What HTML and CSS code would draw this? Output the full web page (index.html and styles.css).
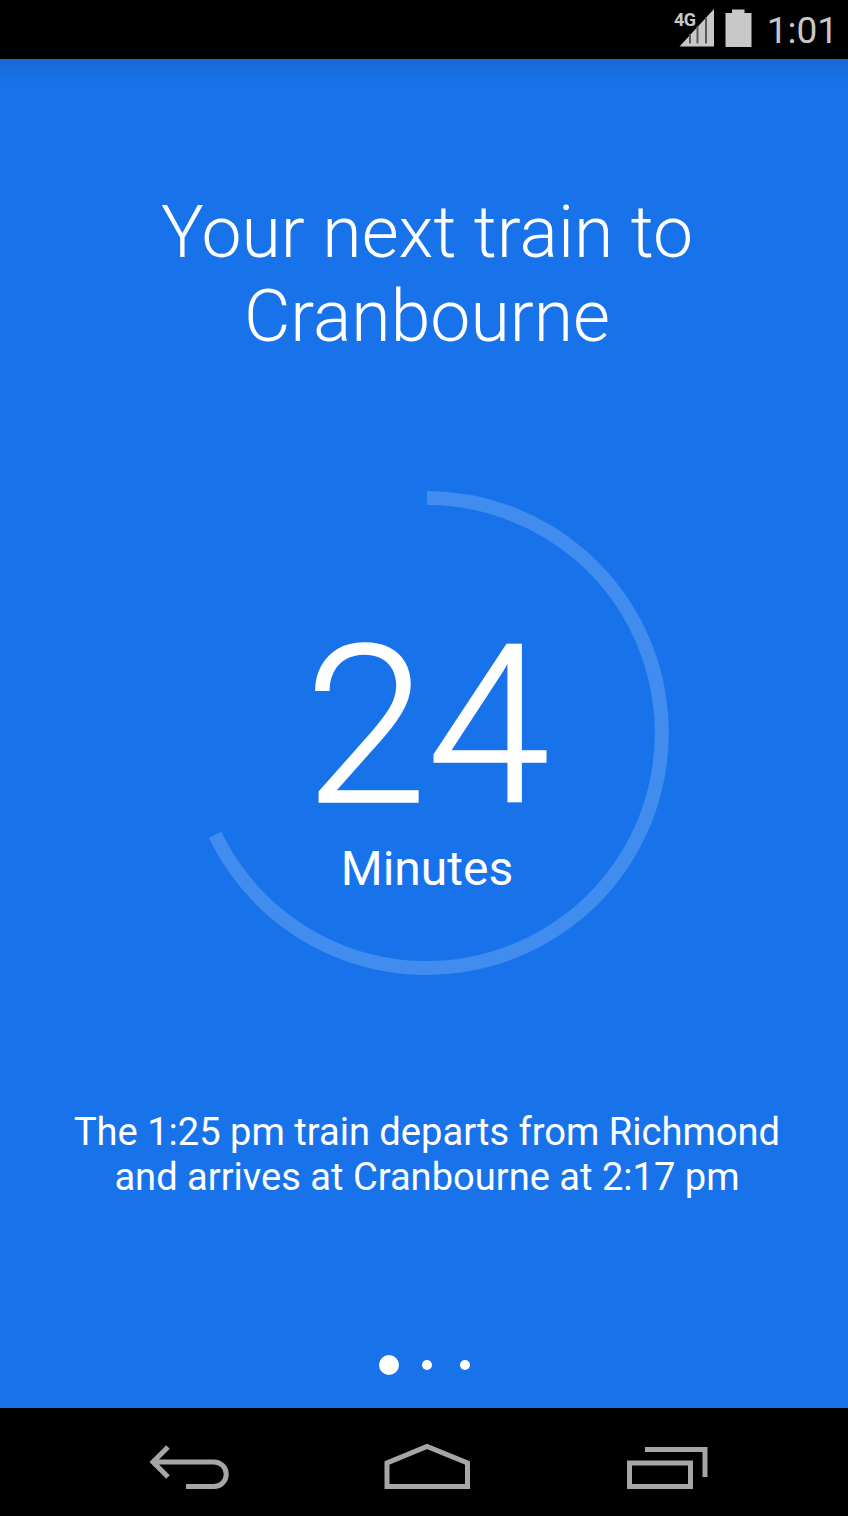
FILE: index.html
```html
<!DOCTYPE html>
<html lang="en">
<head>
<meta charset="utf-8">
<title>Next train</title>
<link rel="stylesheet" href="styles.css">
</head>
<body>
<div class="phone">
  <header class="status">
    <div class="net">
      <span class="net-label">4G</span>
      <svg class="signal" width="36" height="38" viewBox="0 0 36 38"><path class="signal-fill" d="M0.500 37.500H35V0Z"/><path class="signal-gap" d="M11 25V34.500M18.500 17V34.500M27 8V34.500"/></svg>
    </div>
    <svg class="battery" width="27" height="38" viewBox="0 0 27 38"><path d="M7 0.500H19.500V4H26.500V38H0.500V4H7Z"/></svg>
    <span class="clock">1:01</span>
  </header>
  <main class="screen">
    <h1 class="title">Your next train to<br>Cranbourne</h1>
    <div class="ring">
      <svg class="ring-arc" width="486" height="486" viewBox="0 0 486 486"><path d="M243 8A235 235 0 1 1 31 344.800"/></svg>
      <div class="ring-text">
        <div class="count">24</div>
        <div class="unit">Minutes</div>
      </div>
    </div>
    <p class="detail">The 1:25 pm train departs from Richmond<br>and arrives at Cranbourne at 2:17 pm</p>
    <div class="dots">
      <span class="dot dot-active"></span>
      <span class="dot"></span>
      <span class="dot"></span>
    </div>
  </main>
  <nav class="nav">
    <svg class="nav-icon" width="84" height="48" viewBox="0 0 84 48"><path d="M20 4L5 19L20 34M5 19H66A12.250 12.250 0 0 1 66 43.500H38"/></svg>
    <svg class="nav-icon" width="90" height="48" viewBox="0 0 90 48"><path d="M5 43.500V20L45 3.500L85.500 20V43.500Z"/></svg>
    <svg class="nav-icon" width="88" height="48" viewBox="0 0 88 48"><path d="M7.500 20H68.500V43.500H7.500ZM23 6.500H83V34"/></svg>
  </nav>
</div>
</body>
</html>
```
FILE: styles.css
```css
html, body { margin: 0; padding: 0; }
body { background: #000; font-family: Roboto, "Liberation Sans", sans-serif; }
.phone { width: 848px; height: 1516px; display: flex; flex-direction: column; overflow: hidden; }
.status { height: 59px; flex: none; background: #000; display: flex; align-items: flex-start; justify-content: flex-end; padding-right: 10px; box-sizing: border-box; }
.net { display: flex; align-items: flex-start; margin-top: 9px; margin-right: 10px; }
.net-label { font-size: 18px; font-weight: 700; letter-spacing: -0.5px; color: #c8c8c8; line-height: 18px; margin-top: 2px; margin-right: -17px; }
.signal-fill { fill: #c8c8c8; }
.signal-gap { fill: none; stroke: #5a5a5a; stroke-width: 2; }
.battery { fill: #c8c8c8; margin-top: 9px; margin-right: 15px; }
.clock { font-size: 37px; line-height: 38px; color: #c8c8c8; margin-top: 12px; }
.screen { flex: 1; background: linear-gradient(#1868d6, #1873eb 26px); display: flex; flex-direction: column; align-items: center; color: #fff; padding-left: 6px; }
.title { margin: 132px 0 0; font-weight: 300; font-size: 71.5px; line-height: 84px; text-align: center; }
.ring { margin-top: 131px; width: 486px; height: 486px; display: grid; }
.ring-arc { grid-area: 1 / 1; fill: none; stroke: #418cef; stroke-width: 14; }
.ring-text { grid-area: 1 / 1; display: flex; flex-direction: column; align-items: center; }
.count { margin-top: 137px; font-weight: 300; font-size: 221px; line-height: 200px; -webkit-text-stroke: 1.5px #fff; }
.unit { font-size: 48px; line-height: 56px; margin-top: 14px; }
.detail { margin: 134px 0 0; font-size: 38.1px; line-height: 45px; text-align: center; }
.dots { margin-top: 155px; display: grid; grid-template-columns: repeat(3, 38px); place-items: center; height: 20px; }
.dot { width: 10px; height: 10px; border-radius: 50%; background: #fff; }
.dot-active { width: 20px; height: 20px; }
.nav { height: 108px; flex: none; background: #000; display: flex; align-items: flex-start; padding: 35px 0 0 148px; gap: 150px; box-sizing: border-box; }
.nav-icon { fill: none; stroke: #a6a6a6; stroke-width: 5; }
```
